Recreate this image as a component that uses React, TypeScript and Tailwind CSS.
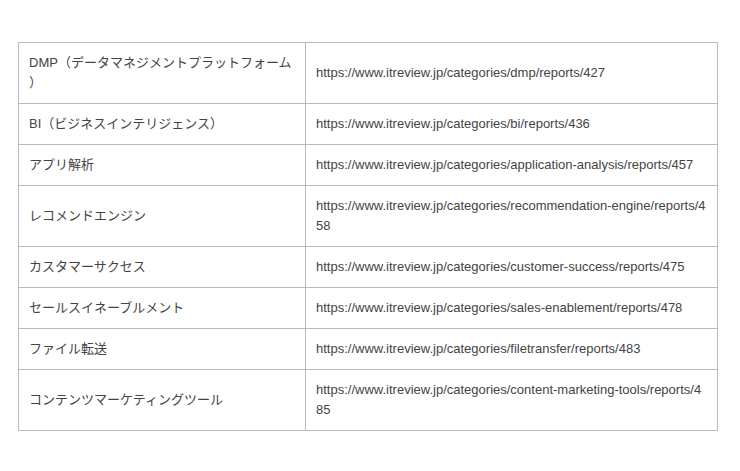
const rows: [string, string][] = [
  ['DMP（データマネジメントプラットフォーム）', 'https://www.itreview.jp/categories/dmp/reports/427'],
  ['BI（ビジネスインテリジェンス）', 'https://www.itreview.jp/categories/bi/reports/436'],
  ['アプリ解析', 'https://www.itreview.jp/categories/application-analysis/reports/457'],
  ['レコメンドエンジン', 'https://www.itreview.jp/categories/recommendation-engine/reports/458'],
  ['カスタマーサクセス', 'https://www.itreview.jp/categories/customer-success/reports/475'],
  ['セールスイネーブルメント', 'https://www.itreview.jp/categories/sales-enablement/reports/478'],
  ['ファイル転送', 'https://www.itreview.jp/categories/filetransfer/reports/483'],
  ['コンテンツマーケティングツール', 'https://www.itreview.jp/categories/content-marketing-tools/reports/485'],
];

export default function App() {
  return (
    <div className="min-h-screen bg-white px-[18px] pt-[42px] font-['Liberation_Sans','Noto_Sans_CJK_JP',sans-serif] text-[13px] leading-[20px] text-[#444]">
      <table className="w-[700px] table-fixed border-collapse">
        <colgroup>
          <col className="w-[287px]" />
          <col />
        </colgroup>
        <tbody>
          {rows.map(([name, url]) => (
            <tr key={url}>
              <td className="border border-[#bbb] px-[10px] py-[10px] align-middle break-all [line-break:anywhere]">
                {name}
              </td>
              <td className="border border-[#bbb] px-[10px] py-[10px] align-middle break-all">
                {url}
              </td>
            </tr>
          ))}
        </tbody>
      </table>
    </div>
  );
}
